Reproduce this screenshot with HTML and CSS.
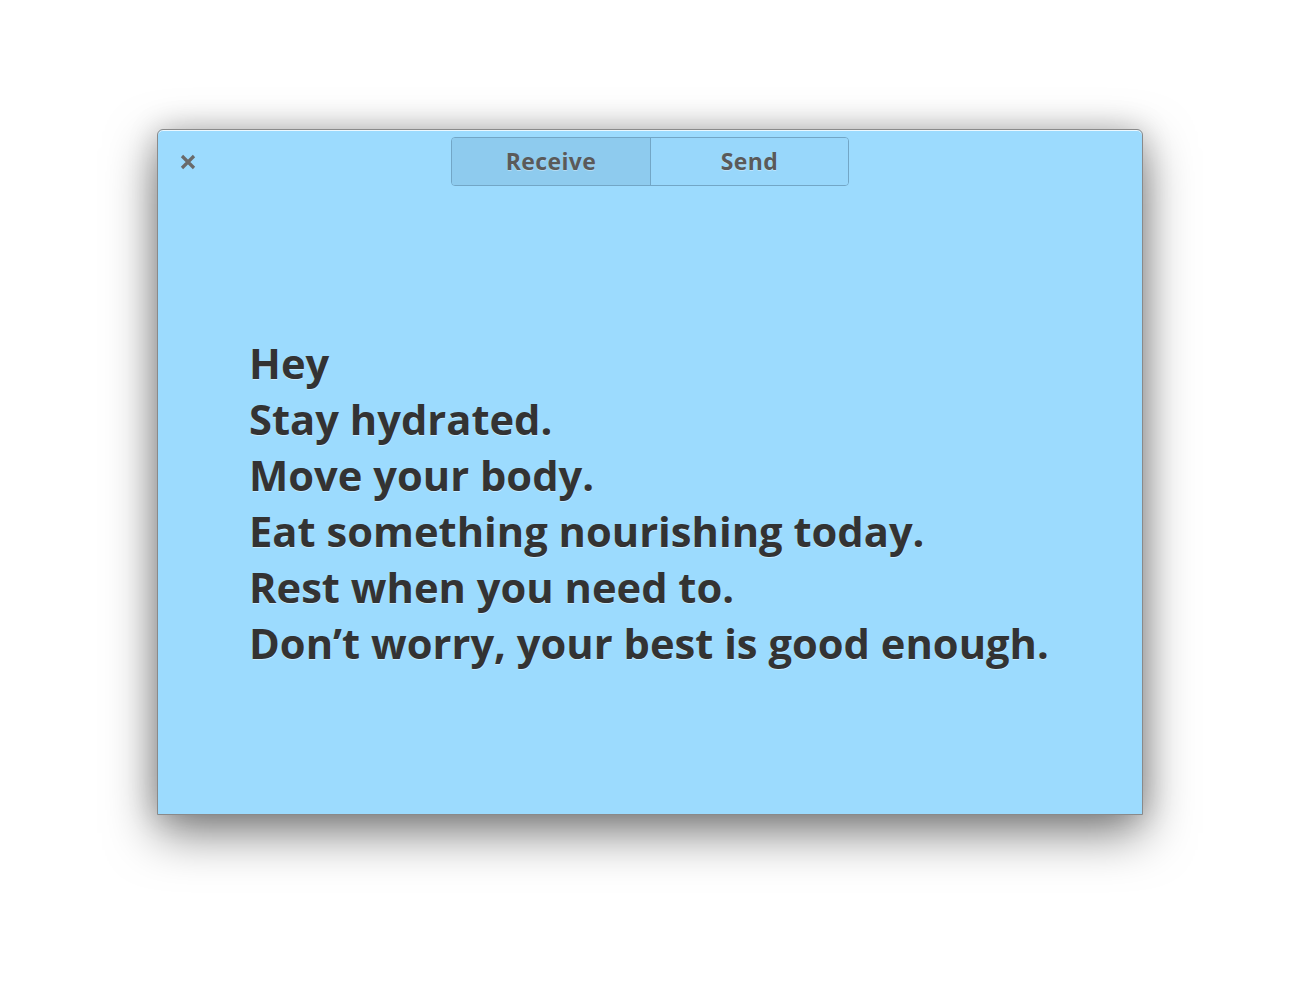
FILE: index.html
```html
<!DOCTYPE html>
<html>
<head>
<meta charset="utf-8">
<link rel="stylesheet" href="styles.css">
</head>
<body>
<div class="window">
  <div class="header">
    <svg class="close" width="18" height="18" viewBox="0 0 18 18">
      <path d="M3 3 L15 15 M15 3 L3 15" stroke="#6a6a6a" stroke-width="3.2" stroke-linecap="butt" fill="none"/>
    </svg>
    <div class="switcher">
      <div class="seg active">Receive</div>
      <div class="seg">Send</div>
    </div>
  </div>
  <div class="content">
    <div class="message">
      <div>Hey</div>
      <div>Stay hydrated.</div>
      <div>Move your body.</div>
      <div>Eat something nourishing today.</div>
      <div>Rest when you need to.</div>
      <div>Don’t worry, your best is good enough.</div>
    </div>
  </div>
</div>
</body>
</html>
```
FILE: styles.css
```css
html, body {
  margin: 0;
  padding: 0;
  background: #ffffff;
}
body {
  padding: 129px 0 0 157px;
  height: 1000px;
  box-sizing: border-box;
  font-family: "Open Sans", sans-serif;
}
.window {
  width: 986px;
  height: 686px;
  box-sizing: border-box;
  background: #9cdbfe;
  border: 1px solid #8a8a8a;
  border-radius: 6px 6px 0 0;
  box-shadow: inset 0 1px 0 rgba(255,255,255,0.8), 0 18px 50px rgba(0,0,0,0.5), 0 0 30px rgba(0,0,0,0.18);
  display: flex;
  flex-direction: column;
}
.header {
  position: relative;
  height: 56px;
  display: flex;
  justify-content: center;
  padding-top: 7px;
  box-sizing: border-box;
}
.close {
  position: absolute;
  left: 21px;
  top: 23px;
}
.switcher {
  display: flex;
  height: 49px;
  border: 1px solid #72a6c6;
  border-radius: 4px;
  box-sizing: border-box;
  overflow: hidden;
}
.seg {
  width: 198px;
  display: flex;
  align-items: center;
  justify-content: center;
  padding-bottom: 2px;
  box-sizing: border-box;
  font-size: 23px;
  letter-spacing: 0.4px;
  font-weight: 700;
  color: #5a5a5a;
  background: #98d7fb;
  text-shadow: 0 1px 0 rgba(255,255,255,0.35);
}
.seg + .seg {
  border-left: 1px solid #72a6c6;
}
.seg.active {
  background: #8ecbee;
}
.content {
  flex: 1;
  display: flex;
  align-items: center;
  padding-left: 91px;
  padding-top: 6px;
}
.message {
  font-size: 41.7px;
  font-weight: 700;
  line-height: 56px;
  color: #333333;
  text-shadow: 0 1px 0 rgba(255,255,255,0.45);
}
```
